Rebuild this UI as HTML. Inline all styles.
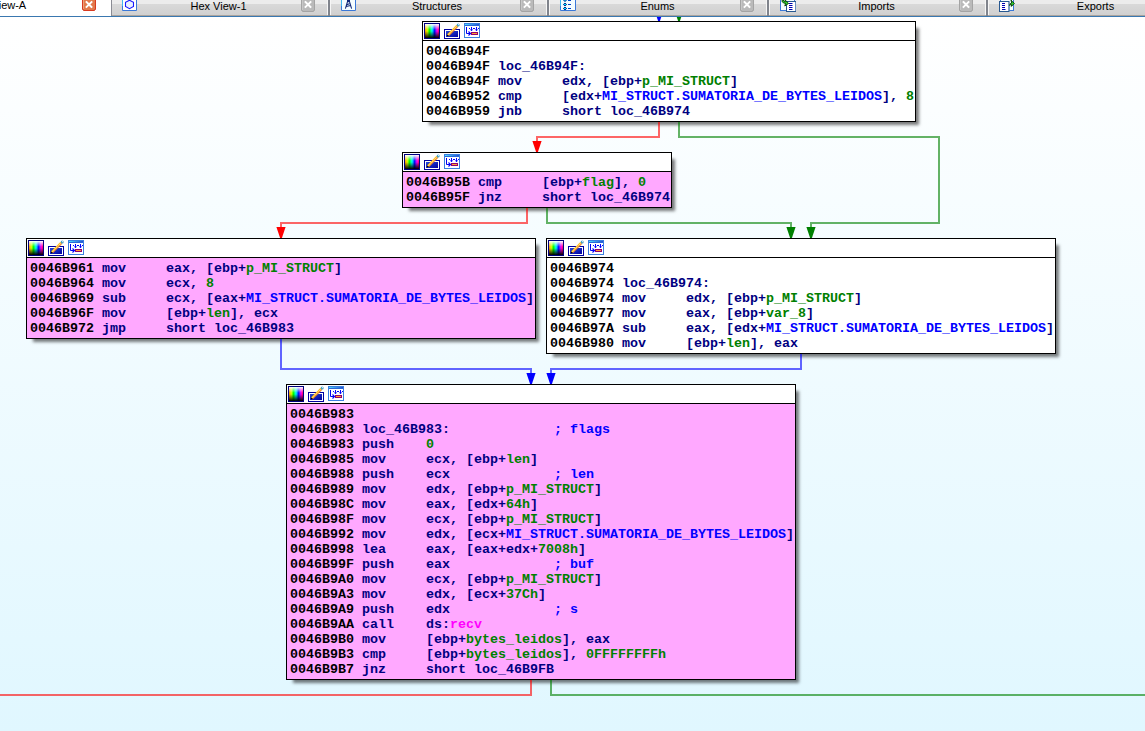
<!DOCTYPE html><html><head><meta charset="utf-8"><style>
html,body{margin:0;padding:0}
body{width:1145px;height:731px;overflow:hidden;position:relative;
 background:linear-gradient(to bottom,#ffffff 0px,#ffffff 17px,#e0f7ff 731px);}
.tabbar{position:absolute;z-index:10;left:0;top:0;width:1145px;height:16px;border-bottom:1px solid #3a78b0;overflow:hidden;
 background:linear-gradient(to bottom,#ececec 0,#ececec 4px,#d9d9d9 4px,#d0d0d0 15px,#aaa49e 15px);}
.tl{position:absolute;top:0;width:300px;height:16px;text-align:center;font-family:"Liberation Sans",sans-serif;font-size:11px;color:#000;line-height:13px;white-space:nowrap}
.node{position:absolute;box-sizing:border-box;border:1px solid #000;background:#fff;
 box-shadow:5px 5px 3px -2px rgba(0,0,0,0.52)}
.hd{position:absolute;left:0;top:0;right:0;height:18px;background:#fff;border-bottom:1px solid #000}
.hd svg{position:absolute;left:0;top:0}
.ct{position:absolute;left:0;top:19px;right:0;bottom:0}
.ct pre{margin:0;position:absolute;left:3px;top:3px;font-family:"Liberation Mono",monospace;font-weight:bold;font-size:13.333px;line-height:15px;color:#000}
.edges{position:absolute;left:0;top:0;z-index:5}
</style></head><body>
<svg class="edges" width="1145" height="731" viewBox="0 0 1145 731">
<path d="M659 122 L659 137 L537 137 L537 141" fill="none" stroke="rgba(255,0,0,0.6)" stroke-width="2" stroke-linejoin="miter"/>
<path d="M532.4 141 L541.6 141 L537.9 152 L536.1 152 Z" fill="#ff0000"/>
<path d="M679 122 L679 137 L939 137 L939 223 L811 223 L811 227" fill="none" stroke="rgba(0,128,0,0.6)" stroke-width="2" stroke-linejoin="miter"/>
<path d="M806.4 227 L815.6 227 L811.9 238 L810.1 238 Z" fill="#008000"/>
<path d="M527 208 L527 223 L281 223 L281 227" fill="none" stroke="rgba(255,0,0,0.6)" stroke-width="2" stroke-linejoin="miter"/>
<path d="M276.4 227 L285.6 227 L281.9 238 L280.1 238 Z" fill="#ff0000"/>
<path d="M547 208 L547 223 L791 223 L791 227" fill="none" stroke="rgba(0,128,0,0.6)" stroke-width="2" stroke-linejoin="miter"/>
<path d="M786.4 227 L795.6 227 L791.9 238 L790.1 238 Z" fill="#008000"/>
<path d="M281 339 L281 369 L531 369 L531 373" fill="none" stroke="rgba(0,0,255,0.6)" stroke-width="2" stroke-linejoin="miter"/>
<path d="M526.4 373 L535.6 373 L531.9 384 L530.1 384 Z" fill="#0000ff"/>
<path d="M801 354 L801 369 L551 369 L551 373" fill="none" stroke="rgba(0,0,255,0.6)" stroke-width="2" stroke-linejoin="miter"/>
<path d="M546.4 373 L555.6 373 L551.9 384 L550.1 384 Z" fill="#0000ff"/>
<path d="M531 680 L531 695 L-5 695" fill="none" stroke="rgba(255,0,0,0.6)" stroke-width="2" stroke-linejoin="miter"/>
<path d="M551 680 L551 695 L1150 695" fill="none" stroke="rgba(0,128,0,0.6)" stroke-width="2" stroke-linejoin="miter"/>
<path d="M659 0 L659 10" fill="none" stroke="rgba(0,0,255,0.6)" stroke-width="2" stroke-linejoin="miter"/>
<path d="M654.4 10 L663.6 10 L659.9 21 L658.1 21 Z" fill="#0000ff"/>
<path d="M679 0 L679 10" fill="none" stroke="rgba(0,128,0,0.6)" stroke-width="2" stroke-linejoin="miter"/>
<path d="M674.4 10 L683.6 10 L679.9 21 L678.1 21 Z" fill="#008000"/>
</svg>
<div class="node" style="left:422px;top:21px;width:494px;height:101px">
<div class="hd"><svg width="60" height="18" viewBox="0 0 60 18" shape-rendering="auto">
<defs>
<linearGradient id="hue" x1="0" y1="0" x2="1" y2="0">
<stop offset="0" stop-color="#ff9000"/><stop offset="0.16" stop-color="#e0ff00"/><stop offset="0.32" stop-color="#00ff00"/>
<stop offset="0.5" stop-color="#00ffff"/><stop offset="0.68" stop-color="#0010ff"/><stop offset="0.86" stop-color="#ff00ff"/><stop offset="1" stop-color="#ff0060"/>
</linearGradient>
<linearGradient id="wb" x1="0" y1="0" x2="0" y2="1">
<stop offset="0" stop-color="#fff" stop-opacity="1"/><stop offset="0.42" stop-color="#fff" stop-opacity="0"/>
<stop offset="0.5" stop-color="#000" stop-opacity="0"/><stop offset="1" stop-color="#000" stop-opacity="1"/>
</linearGradient>
<linearGradient id="pb" x1="0" y1="0" x2="1" y2="1">
<stop offset="0" stop-color="#2848d8"/><stop offset="1" stop-color="#0000a0"/>
</linearGradient>
<linearGradient id="tb" x1="0" y1="0" x2="1" y2="0">
<stop offset="0" stop-color="#50e0ff"/><stop offset="1" stop-color="#2050d0"/>
</linearGradient>
<linearGradient id="wf" x1="0" y1="0" x2="1" y2="0">
<stop offset="0" stop-color="#40c0f0"/><stop offset="1" stop-color="#2060d8"/>
</linearGradient>
</defs>
<rect x="1" y="1" width="16" height="16" fill="#000080"/>
<rect x="2" y="2" width="14" height="14" fill="url(#hue)"/>
<rect x="2" y="2" width="14" height="14" fill="url(#wb)"/>
<rect x="21.5" y="7.5" width="15" height="9" fill="#fff" stroke="#0000a0" stroke-width="1"/>
<rect x="23" y="9" width="12" height="6" fill="url(#pb)"/>
<path d="M25 13.4 L34.4 3.8" stroke="#f08020" stroke-width="2.5" stroke-linecap="butt"/>
<path d="M24.6 13 L34 3.4" stroke="#ffd020" stroke-width="1.2"/>
<path d="M25.4 13 L34.2 4" stroke="#ffffff" stroke-width="0.8" stroke-dasharray="1 1"/>
<path d="M24.2 14 L25.2 13" stroke="#000" stroke-width="1.3"/>
<circle cx="35.2" cy="2.9" r="1.5" fill="#40a0c8"/>
<circle cx="35.5" cy="2.6" r="0.6" fill="#e0f8ff"/>
<rect x="41.5" y="1.5" width="15" height="14" fill="#fff" stroke="#3a7ee0" stroke-width="1"/>
<rect x="42" y="2" width="14" height="1" fill="url(#tb)"/>
<rect x="42" y="3" width="14" height="1" fill="#2a66d8"/>
<path d="M43.5 5 V11.5 H47" stroke="#0000f0" stroke-width="1" fill="none"/>
<path d="M45.5 9.5 L47.5 11.5 L45.5 13.5" stroke="#0000ff" stroke-width="1.1" fill="none"/>
<path d="M46 6.5 H47 M50 6.5 H52 M55 6.5 H56" stroke="#0000ff" stroke-width="1"/>
<path d="M48.5 5 V8.5 M53.5 5 V8.5 M47.5 7.5 L48.5 8.8 L49.5 7.5 M52.5 7.5 L53.5 8.8 L54.5 7.5" stroke="#0000ff" stroke-width="1" fill="none"/>
<rect x="48" y="10" width="7" height="3" fill="#900070"/>
<rect x="49" y="11" width="5" height="1" fill="#ffa030"/>
</svg></div>
<div class="ct" style="background:#ffffff"><pre>0046B94F
0046B94F <span style="color:#000080">loc_46B94F:</span>
0046B94F <span style="color:#000080">mov     </span><span style="color:#000080">edx, [ebp+</span><span style="color:#008000">p_MI_STRUCT</span><span style="color:#000080">]</span>
0046B952 <span style="color:#000080">cmp     </span><span style="color:#000080">[edx+</span><span style="color:#0000FF">MI_STRUCT.SUMATORIA_DE_BYTES_LEIDOS</span><span style="color:#000080">], </span><span style="color:#008000">8</span>
0046B959 <span style="color:#000080">jnb     </span><span style="color:#000080">short loc_46B974</span></pre></div>
</div>
<div class="node" style="left:402px;top:152px;width:270px;height:56px">
<div class="hd"><svg width="60" height="18" viewBox="0 0 60 18" shape-rendering="auto">
<defs>
<linearGradient id="hue" x1="0" y1="0" x2="1" y2="0">
<stop offset="0" stop-color="#ff9000"/><stop offset="0.16" stop-color="#e0ff00"/><stop offset="0.32" stop-color="#00ff00"/>
<stop offset="0.5" stop-color="#00ffff"/><stop offset="0.68" stop-color="#0010ff"/><stop offset="0.86" stop-color="#ff00ff"/><stop offset="1" stop-color="#ff0060"/>
</linearGradient>
<linearGradient id="wb" x1="0" y1="0" x2="0" y2="1">
<stop offset="0" stop-color="#fff" stop-opacity="1"/><stop offset="0.42" stop-color="#fff" stop-opacity="0"/>
<stop offset="0.5" stop-color="#000" stop-opacity="0"/><stop offset="1" stop-color="#000" stop-opacity="1"/>
</linearGradient>
<linearGradient id="pb" x1="0" y1="0" x2="1" y2="1">
<stop offset="0" stop-color="#2848d8"/><stop offset="1" stop-color="#0000a0"/>
</linearGradient>
<linearGradient id="tb" x1="0" y1="0" x2="1" y2="0">
<stop offset="0" stop-color="#50e0ff"/><stop offset="1" stop-color="#2050d0"/>
</linearGradient>
<linearGradient id="wf" x1="0" y1="0" x2="1" y2="0">
<stop offset="0" stop-color="#40c0f0"/><stop offset="1" stop-color="#2060d8"/>
</linearGradient>
</defs>
<rect x="1" y="1" width="16" height="16" fill="#000080"/>
<rect x="2" y="2" width="14" height="14" fill="url(#hue)"/>
<rect x="2" y="2" width="14" height="14" fill="url(#wb)"/>
<rect x="21.5" y="7.5" width="15" height="9" fill="#fff" stroke="#0000a0" stroke-width="1"/>
<rect x="23" y="9" width="12" height="6" fill="url(#pb)"/>
<path d="M25 13.4 L34.4 3.8" stroke="#f08020" stroke-width="2.5" stroke-linecap="butt"/>
<path d="M24.6 13 L34 3.4" stroke="#ffd020" stroke-width="1.2"/>
<path d="M25.4 13 L34.2 4" stroke="#ffffff" stroke-width="0.8" stroke-dasharray="1 1"/>
<path d="M24.2 14 L25.2 13" stroke="#000" stroke-width="1.3"/>
<circle cx="35.2" cy="2.9" r="1.5" fill="#40a0c8"/>
<circle cx="35.5" cy="2.6" r="0.6" fill="#e0f8ff"/>
<rect x="41.5" y="1.5" width="15" height="14" fill="#fff" stroke="#3a7ee0" stroke-width="1"/>
<rect x="42" y="2" width="14" height="1" fill="url(#tb)"/>
<rect x="42" y="3" width="14" height="1" fill="#2a66d8"/>
<path d="M43.5 5 V11.5 H47" stroke="#0000f0" stroke-width="1" fill="none"/>
<path d="M45.5 9.5 L47.5 11.5 L45.5 13.5" stroke="#0000ff" stroke-width="1.1" fill="none"/>
<path d="M46 6.5 H47 M50 6.5 H52 M55 6.5 H56" stroke="#0000ff" stroke-width="1"/>
<path d="M48.5 5 V8.5 M53.5 5 V8.5 M47.5 7.5 L48.5 8.8 L49.5 7.5 M52.5 7.5 L53.5 8.8 L54.5 7.5" stroke="#0000ff" stroke-width="1" fill="none"/>
<rect x="48" y="10" width="7" height="3" fill="#900070"/>
<rect x="49" y="11" width="5" height="1" fill="#ffa030"/>
</svg></div>
<div class="ct" style="background:#ffa8ff"><pre>0046B95B <span style="color:#000080">cmp     </span><span style="color:#000080">[ebp+</span><span style="color:#008000">flag</span><span style="color:#000080">], </span><span style="color:#008000">0</span>
0046B95F <span style="color:#000080">jnz     </span><span style="color:#000080">short loc_46B974</span></pre></div>
</div>
<div class="node" style="left:26px;top:238px;width:510px;height:101px">
<div class="hd"><svg width="60" height="18" viewBox="0 0 60 18" shape-rendering="auto">
<defs>
<linearGradient id="hue" x1="0" y1="0" x2="1" y2="0">
<stop offset="0" stop-color="#ff9000"/><stop offset="0.16" stop-color="#e0ff00"/><stop offset="0.32" stop-color="#00ff00"/>
<stop offset="0.5" stop-color="#00ffff"/><stop offset="0.68" stop-color="#0010ff"/><stop offset="0.86" stop-color="#ff00ff"/><stop offset="1" stop-color="#ff0060"/>
</linearGradient>
<linearGradient id="wb" x1="0" y1="0" x2="0" y2="1">
<stop offset="0" stop-color="#fff" stop-opacity="1"/><stop offset="0.42" stop-color="#fff" stop-opacity="0"/>
<stop offset="0.5" stop-color="#000" stop-opacity="0"/><stop offset="1" stop-color="#000" stop-opacity="1"/>
</linearGradient>
<linearGradient id="pb" x1="0" y1="0" x2="1" y2="1">
<stop offset="0" stop-color="#2848d8"/><stop offset="1" stop-color="#0000a0"/>
</linearGradient>
<linearGradient id="tb" x1="0" y1="0" x2="1" y2="0">
<stop offset="0" stop-color="#50e0ff"/><stop offset="1" stop-color="#2050d0"/>
</linearGradient>
<linearGradient id="wf" x1="0" y1="0" x2="1" y2="0">
<stop offset="0" stop-color="#40c0f0"/><stop offset="1" stop-color="#2060d8"/>
</linearGradient>
</defs>
<rect x="1" y="1" width="16" height="16" fill="#000080"/>
<rect x="2" y="2" width="14" height="14" fill="url(#hue)"/>
<rect x="2" y="2" width="14" height="14" fill="url(#wb)"/>
<rect x="21.5" y="7.5" width="15" height="9" fill="#fff" stroke="#0000a0" stroke-width="1"/>
<rect x="23" y="9" width="12" height="6" fill="url(#pb)"/>
<path d="M25 13.4 L34.4 3.8" stroke="#f08020" stroke-width="2.5" stroke-linecap="butt"/>
<path d="M24.6 13 L34 3.4" stroke="#ffd020" stroke-width="1.2"/>
<path d="M25.4 13 L34.2 4" stroke="#ffffff" stroke-width="0.8" stroke-dasharray="1 1"/>
<path d="M24.2 14 L25.2 13" stroke="#000" stroke-width="1.3"/>
<circle cx="35.2" cy="2.9" r="1.5" fill="#40a0c8"/>
<circle cx="35.5" cy="2.6" r="0.6" fill="#e0f8ff"/>
<rect x="41.5" y="1.5" width="15" height="14" fill="#fff" stroke="#3a7ee0" stroke-width="1"/>
<rect x="42" y="2" width="14" height="1" fill="url(#tb)"/>
<rect x="42" y="3" width="14" height="1" fill="#2a66d8"/>
<path d="M43.5 5 V11.5 H47" stroke="#0000f0" stroke-width="1" fill="none"/>
<path d="M45.5 9.5 L47.5 11.5 L45.5 13.5" stroke="#0000ff" stroke-width="1.1" fill="none"/>
<path d="M46 6.5 H47 M50 6.5 H52 M55 6.5 H56" stroke="#0000ff" stroke-width="1"/>
<path d="M48.5 5 V8.5 M53.5 5 V8.5 M47.5 7.5 L48.5 8.8 L49.5 7.5 M52.5 7.5 L53.5 8.8 L54.5 7.5" stroke="#0000ff" stroke-width="1" fill="none"/>
<rect x="48" y="10" width="7" height="3" fill="#900070"/>
<rect x="49" y="11" width="5" height="1" fill="#ffa030"/>
</svg></div>
<div class="ct" style="background:#ffa8ff"><pre>0046B961 <span style="color:#000080">mov     </span><span style="color:#000080">eax, [ebp+</span><span style="color:#008000">p_MI_STRUCT</span><span style="color:#000080">]</span>
0046B964 <span style="color:#000080">mov     </span><span style="color:#000080">ecx, </span><span style="color:#008000">8</span>
0046B969 <span style="color:#000080">sub     </span><span style="color:#000080">ecx, [eax+</span><span style="color:#0000FF">MI_STRUCT.SUMATORIA_DE_BYTES_LEIDOS</span><span style="color:#000080">]</span>
0046B96F <span style="color:#000080">mov     </span><span style="color:#000080">[ebp+</span><span style="color:#008000">len</span><span style="color:#000080">], ecx</span>
0046B972 <span style="color:#000080">jmp     </span><span style="color:#000080">short loc_46B983</span></pre></div>
</div>
<div class="node" style="left:546px;top:238px;width:510px;height:116px">
<div class="hd"><svg width="60" height="18" viewBox="0 0 60 18" shape-rendering="auto">
<defs>
<linearGradient id="hue" x1="0" y1="0" x2="1" y2="0">
<stop offset="0" stop-color="#ff9000"/><stop offset="0.16" stop-color="#e0ff00"/><stop offset="0.32" stop-color="#00ff00"/>
<stop offset="0.5" stop-color="#00ffff"/><stop offset="0.68" stop-color="#0010ff"/><stop offset="0.86" stop-color="#ff00ff"/><stop offset="1" stop-color="#ff0060"/>
</linearGradient>
<linearGradient id="wb" x1="0" y1="0" x2="0" y2="1">
<stop offset="0" stop-color="#fff" stop-opacity="1"/><stop offset="0.42" stop-color="#fff" stop-opacity="0"/>
<stop offset="0.5" stop-color="#000" stop-opacity="0"/><stop offset="1" stop-color="#000" stop-opacity="1"/>
</linearGradient>
<linearGradient id="pb" x1="0" y1="0" x2="1" y2="1">
<stop offset="0" stop-color="#2848d8"/><stop offset="1" stop-color="#0000a0"/>
</linearGradient>
<linearGradient id="tb" x1="0" y1="0" x2="1" y2="0">
<stop offset="0" stop-color="#50e0ff"/><stop offset="1" stop-color="#2050d0"/>
</linearGradient>
<linearGradient id="wf" x1="0" y1="0" x2="1" y2="0">
<stop offset="0" stop-color="#40c0f0"/><stop offset="1" stop-color="#2060d8"/>
</linearGradient>
</defs>
<rect x="1" y="1" width="16" height="16" fill="#000080"/>
<rect x="2" y="2" width="14" height="14" fill="url(#hue)"/>
<rect x="2" y="2" width="14" height="14" fill="url(#wb)"/>
<rect x="21.5" y="7.5" width="15" height="9" fill="#fff" stroke="#0000a0" stroke-width="1"/>
<rect x="23" y="9" width="12" height="6" fill="url(#pb)"/>
<path d="M25 13.4 L34.4 3.8" stroke="#f08020" stroke-width="2.5" stroke-linecap="butt"/>
<path d="M24.6 13 L34 3.4" stroke="#ffd020" stroke-width="1.2"/>
<path d="M25.4 13 L34.2 4" stroke="#ffffff" stroke-width="0.8" stroke-dasharray="1 1"/>
<path d="M24.2 14 L25.2 13" stroke="#000" stroke-width="1.3"/>
<circle cx="35.2" cy="2.9" r="1.5" fill="#40a0c8"/>
<circle cx="35.5" cy="2.6" r="0.6" fill="#e0f8ff"/>
<rect x="41.5" y="1.5" width="15" height="14" fill="#fff" stroke="#3a7ee0" stroke-width="1"/>
<rect x="42" y="2" width="14" height="1" fill="url(#tb)"/>
<rect x="42" y="3" width="14" height="1" fill="#2a66d8"/>
<path d="M43.5 5 V11.5 H47" stroke="#0000f0" stroke-width="1" fill="none"/>
<path d="M45.5 9.5 L47.5 11.5 L45.5 13.5" stroke="#0000ff" stroke-width="1.1" fill="none"/>
<path d="M46 6.5 H47 M50 6.5 H52 M55 6.5 H56" stroke="#0000ff" stroke-width="1"/>
<path d="M48.5 5 V8.5 M53.5 5 V8.5 M47.5 7.5 L48.5 8.8 L49.5 7.5 M52.5 7.5 L53.5 8.8 L54.5 7.5" stroke="#0000ff" stroke-width="1" fill="none"/>
<rect x="48" y="10" width="7" height="3" fill="#900070"/>
<rect x="49" y="11" width="5" height="1" fill="#ffa030"/>
</svg></div>
<div class="ct" style="background:#ffffff"><pre>0046B974
0046B974 <span style="color:#000080">loc_46B974:</span>
0046B974 <span style="color:#000080">mov     </span><span style="color:#000080">edx, [ebp+</span><span style="color:#008000">p_MI_STRUCT</span><span style="color:#000080">]</span>
0046B977 <span style="color:#000080">mov     </span><span style="color:#000080">eax, [ebp+</span><span style="color:#008000">var_8</span><span style="color:#000080">]</span>
0046B97A <span style="color:#000080">sub     </span><span style="color:#000080">eax, [edx+</span><span style="color:#0000FF">MI_STRUCT.SUMATORIA_DE_BYTES_LEIDOS</span><span style="color:#000080">]</span>
0046B980 <span style="color:#000080">mov     </span><span style="color:#000080">[ebp+</span><span style="color:#008000">len</span><span style="color:#000080">], eax</span></pre></div>
</div>
<div class="node" style="left:286px;top:384px;width:510px;height:296px">
<div class="hd"><svg width="60" height="18" viewBox="0 0 60 18" shape-rendering="auto">
<defs>
<linearGradient id="hue" x1="0" y1="0" x2="1" y2="0">
<stop offset="0" stop-color="#ff9000"/><stop offset="0.16" stop-color="#e0ff00"/><stop offset="0.32" stop-color="#00ff00"/>
<stop offset="0.5" stop-color="#00ffff"/><stop offset="0.68" stop-color="#0010ff"/><stop offset="0.86" stop-color="#ff00ff"/><stop offset="1" stop-color="#ff0060"/>
</linearGradient>
<linearGradient id="wb" x1="0" y1="0" x2="0" y2="1">
<stop offset="0" stop-color="#fff" stop-opacity="1"/><stop offset="0.42" stop-color="#fff" stop-opacity="0"/>
<stop offset="0.5" stop-color="#000" stop-opacity="0"/><stop offset="1" stop-color="#000" stop-opacity="1"/>
</linearGradient>
<linearGradient id="pb" x1="0" y1="0" x2="1" y2="1">
<stop offset="0" stop-color="#2848d8"/><stop offset="1" stop-color="#0000a0"/>
</linearGradient>
<linearGradient id="tb" x1="0" y1="0" x2="1" y2="0">
<stop offset="0" stop-color="#50e0ff"/><stop offset="1" stop-color="#2050d0"/>
</linearGradient>
<linearGradient id="wf" x1="0" y1="0" x2="1" y2="0">
<stop offset="0" stop-color="#40c0f0"/><stop offset="1" stop-color="#2060d8"/>
</linearGradient>
</defs>
<rect x="1" y="1" width="16" height="16" fill="#000080"/>
<rect x="2" y="2" width="14" height="14" fill="url(#hue)"/>
<rect x="2" y="2" width="14" height="14" fill="url(#wb)"/>
<rect x="21.5" y="7.5" width="15" height="9" fill="#fff" stroke="#0000a0" stroke-width="1"/>
<rect x="23" y="9" width="12" height="6" fill="url(#pb)"/>
<path d="M25 13.4 L34.4 3.8" stroke="#f08020" stroke-width="2.5" stroke-linecap="butt"/>
<path d="M24.6 13 L34 3.4" stroke="#ffd020" stroke-width="1.2"/>
<path d="M25.4 13 L34.2 4" stroke="#ffffff" stroke-width="0.8" stroke-dasharray="1 1"/>
<path d="M24.2 14 L25.2 13" stroke="#000" stroke-width="1.3"/>
<circle cx="35.2" cy="2.9" r="1.5" fill="#40a0c8"/>
<circle cx="35.5" cy="2.6" r="0.6" fill="#e0f8ff"/>
<rect x="41.5" y="1.5" width="15" height="14" fill="#fff" stroke="#3a7ee0" stroke-width="1"/>
<rect x="42" y="2" width="14" height="1" fill="url(#tb)"/>
<rect x="42" y="3" width="14" height="1" fill="#2a66d8"/>
<path d="M43.5 5 V11.5 H47" stroke="#0000f0" stroke-width="1" fill="none"/>
<path d="M45.5 9.5 L47.5 11.5 L45.5 13.5" stroke="#0000ff" stroke-width="1.1" fill="none"/>
<path d="M46 6.5 H47 M50 6.5 H52 M55 6.5 H56" stroke="#0000ff" stroke-width="1"/>
<path d="M48.5 5 V8.5 M53.5 5 V8.5 M47.5 7.5 L48.5 8.8 L49.5 7.5 M52.5 7.5 L53.5 8.8 L54.5 7.5" stroke="#0000ff" stroke-width="1" fill="none"/>
<rect x="48" y="10" width="7" height="3" fill="#900070"/>
<rect x="49" y="11" width="5" height="1" fill="#ffa030"/>
</svg></div>
<div class="ct" style="background:#ffa8ff"><pre>0046B983
0046B983 <span style="color:#000080">loc_46B983:</span><span style="color:#000080">             </span><span style="color:#0000FF">; flags</span>
0046B983 <span style="color:#000080">push    </span><span style="color:#008000">0</span>
0046B985 <span style="color:#000080">mov     </span><span style="color:#000080">ecx, [ebp+</span><span style="color:#008000">len</span><span style="color:#000080">]</span>
0046B988 <span style="color:#000080">push    </span><span style="color:#000080">ecx</span><span style="color:#000080">             </span><span style="color:#0000FF">; len</span>
0046B989 <span style="color:#000080">mov     </span><span style="color:#000080">edx, [ebp+</span><span style="color:#008000">p_MI_STRUCT</span><span style="color:#000080">]</span>
0046B98C <span style="color:#000080">mov     </span><span style="color:#000080">eax, [edx+</span><span style="color:#008000">64h</span><span style="color:#000080">]</span>
0046B98F <span style="color:#000080">mov     </span><span style="color:#000080">ecx, [ebp+</span><span style="color:#008000">p_MI_STRUCT</span><span style="color:#000080">]</span>
0046B992 <span style="color:#000080">mov     </span><span style="color:#000080">edx, [ecx+</span><span style="color:#0000FF">MI_STRUCT.SUMATORIA_DE_BYTES_LEIDOS</span><span style="color:#000080">]</span>
0046B998 <span style="color:#000080">lea     </span><span style="color:#000080">eax, [eax+edx+</span><span style="color:#008000">7008h</span><span style="color:#000080">]</span>
0046B99F <span style="color:#000080">push    </span><span style="color:#000080">eax</span><span style="color:#000080">             </span><span style="color:#0000FF">; buf</span>
0046B9A0 <span style="color:#000080">mov     </span><span style="color:#000080">ecx, [ebp+</span><span style="color:#008000">p_MI_STRUCT</span><span style="color:#000080">]</span>
0046B9A3 <span style="color:#000080">mov     </span><span style="color:#000080">edx, [ecx+</span><span style="color:#008000">37Ch</span><span style="color:#000080">]</span>
0046B9A9 <span style="color:#000080">push    </span><span style="color:#000080">edx</span><span style="color:#000080">             </span><span style="color:#0000FF">; s</span>
0046B9AA <span style="color:#000080">call    </span><span style="color:#000080">ds:</span><span style="color:#FF00FF">recv</span>
0046B9B0 <span style="color:#000080">mov     </span><span style="color:#000080">[ebp+</span><span style="color:#008000">bytes_leidos</span><span style="color:#000080">], eax</span>
0046B9B3 <span style="color:#000080">cmp     </span><span style="color:#000080">[ebp+</span><span style="color:#008000">bytes_leidos</span><span style="color:#000080">], </span><span style="color:#008000">0FFFFFFFFh</span>
0046B9B7 <span style="color:#000080">jnz     </span><span style="color:#000080">short loc_46B9FB</span></pre></div>
</div>
<div class="tabbar">
<div style="position:absolute;left:0;top:0;width:111px;height:16px;background:#fff"></div>
<div style="position:absolute;left:111px;top:0;width:1px;height:16px;background:#8a8c94"></div>
<div style="position:absolute;left:327px;top:0;width:1px;height:15px;background:#f6f6f6"></div>
<div style="position:absolute;left:328px;top:0;width:2px;height:16px;background:#80848c"></div>
<div style="position:absolute;left:330px;top:0;width:1px;height:15px;background:#f6f6f6"></div>
<div style="position:absolute;left:546px;top:0;width:1px;height:15px;background:#f6f6f6"></div>
<div style="position:absolute;left:547px;top:0;width:2px;height:16px;background:#80848c"></div>
<div style="position:absolute;left:549px;top:0;width:1px;height:15px;background:#f6f6f6"></div>
<div style="position:absolute;left:766px;top:0;width:1px;height:15px;background:#f6f6f6"></div>
<div style="position:absolute;left:767px;top:0;width:2px;height:16px;background:#80848c"></div>
<div style="position:absolute;left:769px;top:0;width:1px;height:15px;background:#f6f6f6"></div>
<div style="position:absolute;left:985px;top:0;width:1px;height:15px;background:#f6f6f6"></div>
<div style="position:absolute;left:986px;top:0;width:2px;height:16px;background:#80848c"></div>
<div style="position:absolute;left:988px;top:0;width:1px;height:15px;background:#f6f6f6"></div>
<div class="tl" style="left:-151.5px;top:-1px">IDA View-A</div>
<svg style="position:absolute;left:82px;top:0" width="14" height="11" viewBox="0 0 14 11">
<path d="M0.5 -1 V9.5 H1.5 V10.5 H12.5 V9.5 H13.5 V-1" fill="#e27a4c" stroke="#d83a20" stroke-width="1"/>
<path d="M1.5 -1 V9" stroke="#eba07a" stroke-width="1"/>
<path d="M4.5 2 L9.5 7 M9.5 2 L4.5 7" stroke="#fff" stroke-width="1.9" stroke-linecap="square"/>
</svg>
<div class="tl" style="left:68.5px;top:0px">Hex View-1</div>
<svg style="position:absolute;left:122px;top:0" width="15" height="11" viewBox="0 0 15 11">
<path d="M0.5 -1 V10.5 H14.5 V-1" fill="#fff" stroke="#3a78d8" stroke-width="1"/>
<path d="M0.5 -1 V6" stroke="#40b8f0" stroke-width="1"/>
<path d="M7.5 0.2 L11.5 2.4 V6.4 L7.5 8.6 L3.5 6.4 V2.4 Z" fill="#e8f0ff" stroke="#1818ff" stroke-width="1.05"/>
</svg>
<svg style="position:absolute;left:301px;top:0" width="14" height="12" viewBox="0 0 14 12">
<path d="M0.5 -1 V10.5 H1.5 V11.5 H12.5 V10.5 H13.5 V-1" fill="#bababa" stroke="#a4a4a4" stroke-width="1"/>
<path d="M1.5 -1 V10" stroke="#c8c8c8" stroke-width="1"/>
<path d="M4.5 2 L9.5 7 M9.5 2 L4.5 7" stroke="#fff" stroke-width="1.9" stroke-linecap="square"/>
</svg>
<div class="tl" style="left:287.0px;top:0px">Structures</div>
<svg style="position:absolute;left:341px;top:0" width="15" height="11" viewBox="0 0 15 11">
<path d="M0.5 -1 V10.5 H14.5 V-1" fill="#f4fdff" stroke="#3a78d8" stroke-width="1"/>
<path d="M0.5 -1 V6" stroke="#40b8f0" stroke-width="1"/>
<path d="M6 0 H9 V2.2 H6 Z" fill="#102878"/>
<path d="M6.4 2 L4.4 8.6 M8.6 2 L10.6 8.6 M5.8 4.8 L8.4 3.8 M5.2 6.6 L9.6 5.4" stroke="#102878" stroke-width="1.05" fill="none"/>
</svg>
<svg style="position:absolute;left:520px;top:0" width="14" height="12" viewBox="0 0 14 12">
<path d="M0.5 -1 V10.5 H1.5 V11.5 H12.5 V10.5 H13.5 V-1" fill="#bababa" stroke="#a4a4a4" stroke-width="1"/>
<path d="M1.5 -1 V10" stroke="#c8c8c8" stroke-width="1"/>
<path d="M4.5 2 L9.5 7 M9.5 2 L4.5 7" stroke="#fff" stroke-width="1.9" stroke-linecap="square"/>
</svg>
<div class="tl" style="left:507.5px;top:0px">Enums</div>
<svg style="position:absolute;left:560px;top:0" width="16" height="11" viewBox="0 0 16 11">
<path d="M0.5 -1 V10.5 H15.5 V-1" fill="#f4fdff" stroke="#3a78d8" stroke-width="1"/>
<path d="M0.5 -1 V6" stroke="#40b8f0" stroke-width="1"/>
<path d="M5 -1.5 L6.6 0 L5 1.5 L3.4 0 Z M5 3 L6.6 4.5 L5 6 L3.4 4.5 Z M5 7 L6.6 8.5 L5 10 L3.4 8.5 Z" fill="#00e8ff" stroke="#002890" stroke-width="1"/>
<path d="M8 0.3 H11 M8 4.5 H11 M8 8.5 H11" stroke="#0040c8" stroke-width="1.2"/>
</svg>
<svg style="position:absolute;left:740px;top:0" width="14" height="12" viewBox="0 0 14 12">
<path d="M0.5 -1 V10.5 H1.5 V11.5 H12.5 V10.5 H13.5 V-1" fill="#bababa" stroke="#a4a4a4" stroke-width="1"/>
<path d="M1.5 -1 V10" stroke="#c8c8c8" stroke-width="1"/>
<path d="M4.5 2 L9.5 7 M9.5 2 L4.5 7" stroke="#fff" stroke-width="1.9" stroke-linecap="square"/>
</svg>
<div class="tl" style="left:726.5px;top:0px">Imports</div>
<svg style="position:absolute;left:780px;top:0" width="17" height="13" viewBox="0 0 17 13">
<rect x="0.5" y="-2" width="14" height="12.5" fill="#f4fdff" stroke="#3a78d8" stroke-width="1"/>
<rect x="6.5" y="1.5" width="9" height="10" fill="#fff" stroke="#285890" stroke-width="1"/>
<path d="M15.5 2 V11" stroke="#6890c0" stroke-width="1"/>
<path d="M9 3.5 H12.5 M9 5.5 H12.5 M9 7.5 H12.5 M9 9.5 H12.5" stroke="#0000b0" stroke-width="1"/>
<path d="M1.8 1 Q3 3.6 5.6 3.4 L4.8 6 L8.6 3.4 L5.2 0 L5.4 1.6 Q3.6 1.6 2.8 -0.5 Z" fill="#30d030" stroke="#003800" stroke-width="0.9" stroke-linejoin="round"/>
</svg>
<svg style="position:absolute;left:959px;top:0" width="14" height="12" viewBox="0 0 14 12">
<path d="M0.5 -1 V10.5 H1.5 V11.5 H12.5 V10.5 H13.5 V-1" fill="#bababa" stroke="#a4a4a4" stroke-width="1"/>
<path d="M1.5 -1 V10" stroke="#c8c8c8" stroke-width="1"/>
<path d="M4.5 2 L9.5 7 M9.5 2 L4.5 7" stroke="#fff" stroke-width="1.9" stroke-linecap="square"/>
</svg>
<div class="tl" style="left:945.5px;top:0px">Exports</div>
<svg style="position:absolute;left:999px;top:0" width="17" height="13" viewBox="0 0 17 13">
<rect x="1.5" y="-2" width="13" height="12.5" fill="#f4fdff" stroke="#3a78d8" stroke-width="1"/>
<rect x="0.5" y="1.5" width="9.5" height="10" fill="#fff" stroke="#285890" stroke-width="1"/>
<path d="M10 2 V11" stroke="#6890c0" stroke-width="1"/>
<path d="M3 3.5 H6 M3 5.5 H6 M3 7.5 H6 M3 9.5 H6.5" stroke="#0000b0" stroke-width="1"/>
<path d="M10.6 5.4 Q10.8 3.2 12.6 3 L12.2 0.5 L15.4 3.4 L12.4 6.4 L12.6 4.6 Q11.4 4.6 10.6 5.4 Z" fill="#30d030" stroke="#003800" stroke-width="0.9" stroke-linejoin="round"/>
<path d="M12.2 -1 V1" stroke="#003800" stroke-width="1"/>
</svg>
<svg style="position:absolute;left:1178px;top:0" width="14" height="12" viewBox="0 0 14 12">
<path d="M0.5 -1 V10.5 H1.5 V11.5 H12.5 V10.5 H13.5 V-1" fill="#bababa" stroke="#a4a4a4" stroke-width="1"/>
<path d="M1.5 -1 V10" stroke="#c8c8c8" stroke-width="1"/>
<path d="M4.5 2 L9.5 7 M9.5 2 L4.5 7" stroke="#fff" stroke-width="1.9" stroke-linecap="square"/>
</svg>
</div>
</body></html>
